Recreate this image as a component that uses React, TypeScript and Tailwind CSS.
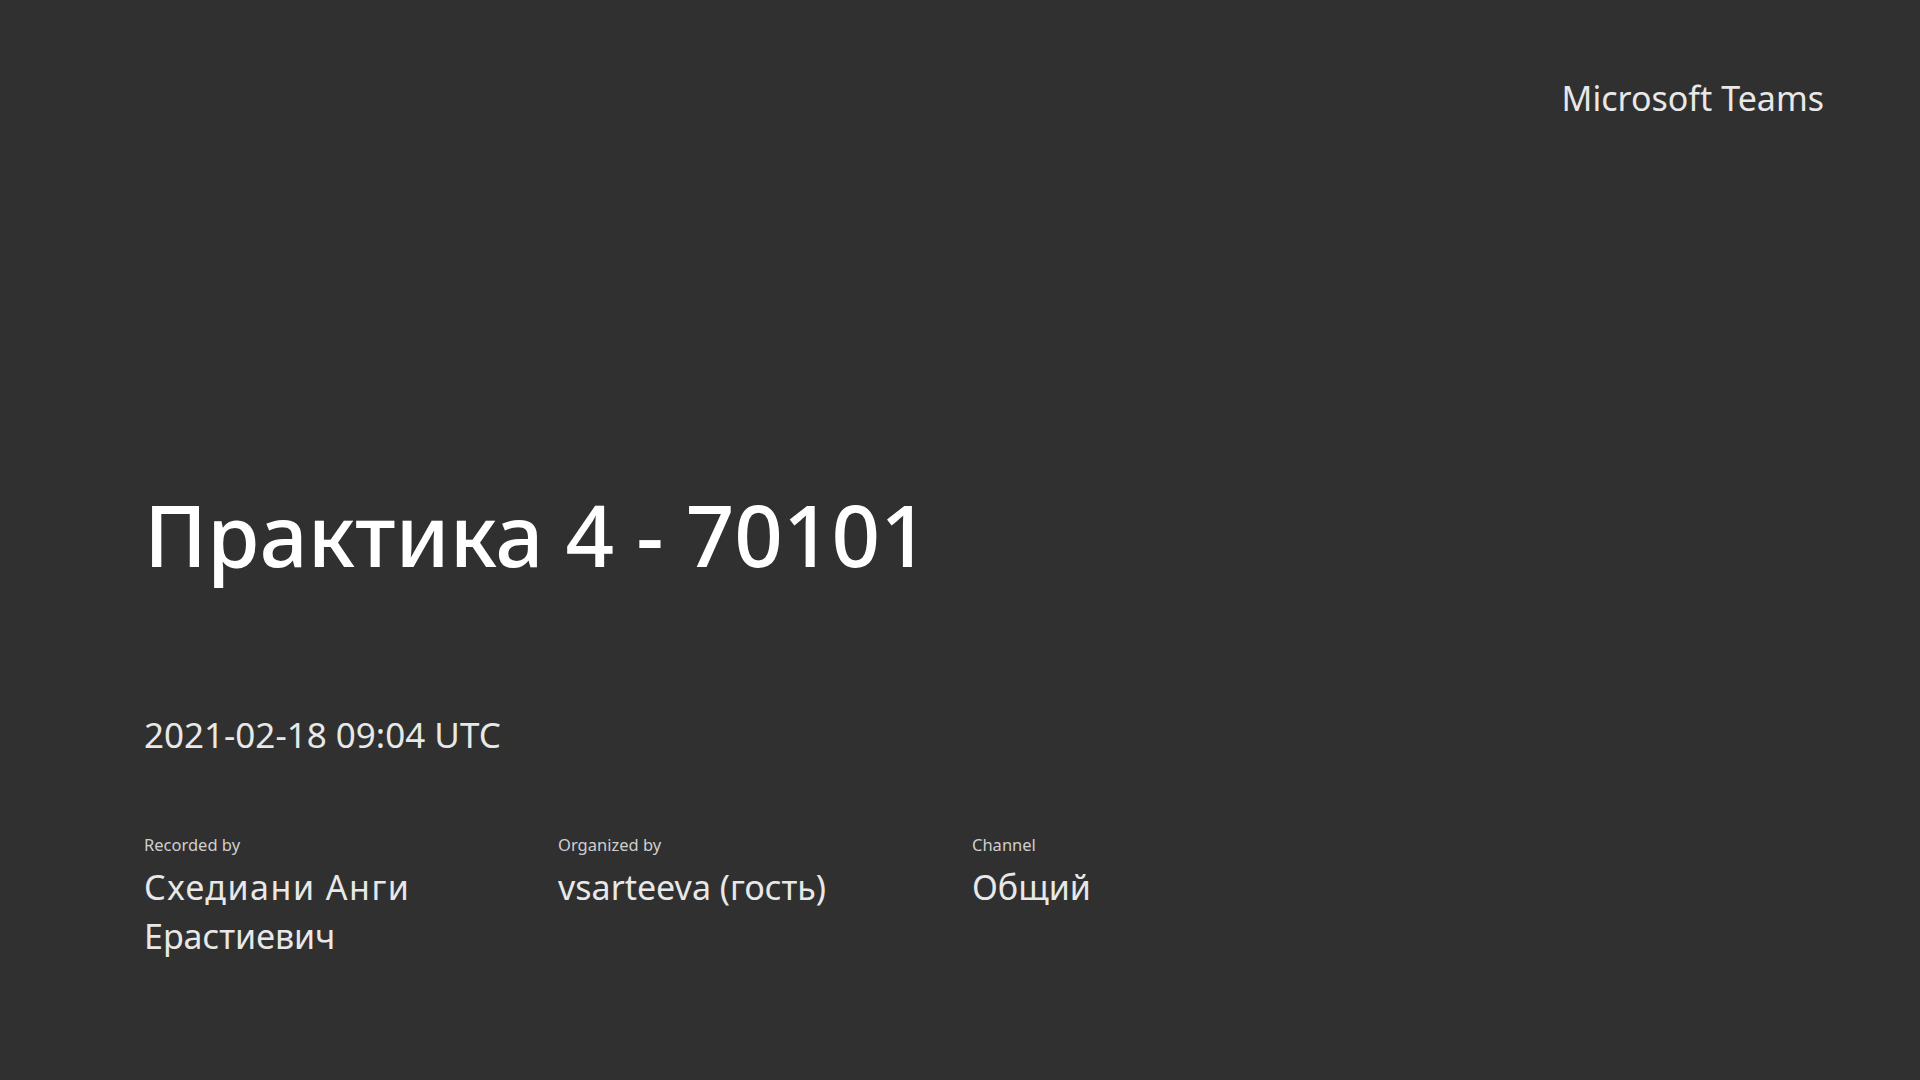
const details = [
  {
    label: "Recorded by",
    value: (
      <>
        <span className="block tracking-[1.5px]">Схедиани Анги</span>
        <span className="block">Ерастиевич</span>
      </>
    ),
  },
  { label: "Organized by", value: "vsarteeva (гость)" },
  { label: "Channel", value: "Общий" },
];

export default function App() {
  return (
    <main className="flex h-screen w-full flex-col overflow-hidden bg-[#303030] pr-[96px] pl-[144px] font-['Noto_Sans',sans-serif] text-white">
      <header className="flex justify-end pt-[78px]">
        <span className="text-[34px] leading-[40px] text-[#e8e8e8]">Microsoft Teams</span>
      </header>

      <h1 className="mt-[361px] text-[85px] leading-[110px] font-medium">Практика 4 - 70101</h1>

      <p className="mt-[124px] text-[35px] leading-[44px] text-[#e8e8e8]">2021-02-18 09:04 UTC</p>

      <div className="mt-[77px] flex">
        {details.map((item) => (
          <div key={item.label} className="w-[414px]">
            <p className="text-[16.5px] leading-[22px] text-[#cfcfcf]">{item.label}</p>
            <p className="mt-[7px] w-[290px] text-[34px] leading-[49px] text-[#e8e8e8]">{item.value}</p>
          </div>
        ))}
      </div>
    </main>
  );
}
